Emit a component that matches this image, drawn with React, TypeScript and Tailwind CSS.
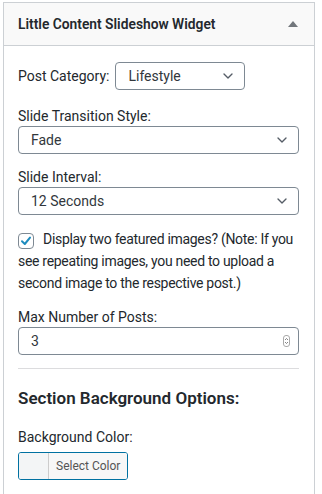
import { ChevronDown } from "lucide-react";

function Select({ value, className = "" }: { value: string; className?: string }) {
  return (
    <div
      className={`flex items-center justify-between h-[28px] rounded-[4px] border border-[#7e8993] bg-white pl-[12px] pr-[8px] ${className}`}
    >
      <span className="text-[14px] text-[#32373c]">{value}</span>
      <ChevronDown size={16} strokeWidth={2} className="text-[#555d66]" />
    </div>
  );
}

export default function App() {
  return (
    <div className="w-[322px] h-[494px] bg-white pt-[2px] pl-[3px] overflow-hidden font-['Roboto',sans-serif] text-[#23282d]">
      <div className="w-[312px] h-[500px] border border-b-0 border-[#ccd0d4] bg-white">
        {/* Widget Header */}
        <div className="h-[43px] flex items-center justify-between bg-[#f9f9f9] border-b border-[#ccd0d4] pl-[14px] pr-[16px]">
          <h3 className="text-[13.8px] font-semibold text-[#23282d]">Little Content Slideshow Widget</h3>
          <svg width="10" height="6" viewBox="0 0 10 6" className="mb-[1px]">
            <polygon points="5,0 10,6 0,6" fill="#72777c" />
          </svg>
        </div>

        {/* Widget Body */}
        <div className="pl-[14px] pr-[15px] text-[14px] leading-[20px]">
          <div className="flex items-center mt-[16px] gap-[6px]">
            <span>Post Category:</span>
            <Select value="Lifestyle" className="w-[130px]" />
          </div>

          <div className="mt-[16px]">Slide Transition Style:</div>
          <Select value="Fade" />

          <div className="mt-[13px]">Slide Interval:</div>
          <Select value="12 Seconds" />

          <div className="mt-[13px] leading-[22px] tracking-[-0.3px]">
            <span className="inline-flex align-[-3px] mr-[9px] w-[16px] h-[16px] rounded-[4px] border border-[#7e8993] items-center justify-center bg-white">
              <svg width="12" height="12" viewBox="0 0 12 12">
                <path d="M2 6.3 L4.8 9 L10 2.6" stroke="#1e8cbe" strokeWidth="2" fill="none" strokeLinecap="round" strokeLinejoin="round" />
              </svg>
            </span>
            Display two featured images? (Note: If you see repeating images, you need to upload a second image to the respective post.)
          </div>

          <div className="mt-[13px]">Max Number of Posts:</div>
          <div className="flex items-center justify-between h-[28px] rounded-[4px] border border-[#7e8993] bg-white pl-[12px] pr-[8px]">
            <span className="text-[14px] text-[#32373c]">3</span>
            <span className="flex flex-col items-center justify-center w-[7px] h-[12px] rounded-[3px] border border-[#aaa]">
              <svg width="5" height="8" viewBox="0 0 5 8">
                <path d="M1 3 L2.5 1.5 L4 3 M1 5 L2.5 6.5 L4 5" stroke="#666" strokeWidth="0.8" fill="none" />
              </svg>
            </span>
          </div>

          <hr className="mt-[13px] border-0 border-t border-[#dcdcde]" />

          <h4 className="mt-[17px] text-[17px] font-semibold leading-[24px]">Section Background Options:</h4>

          <div className="mt-[17px]">Background Color:</div>
          <div className="mt-[5px] inline-flex h-[28px] rounded-[3px] border border-[#0071a1] overflow-hidden">
            <span className="w-[30px] bg-[#f3f5f6] border-r border-[#ccc]" />
            <span className="flex items-center px-[7px] text-[12px] text-[#555] bg-[#f7f7f7]">Select Color</span>
          </div>
        </div>
      </div>
    </div>
  );
}
